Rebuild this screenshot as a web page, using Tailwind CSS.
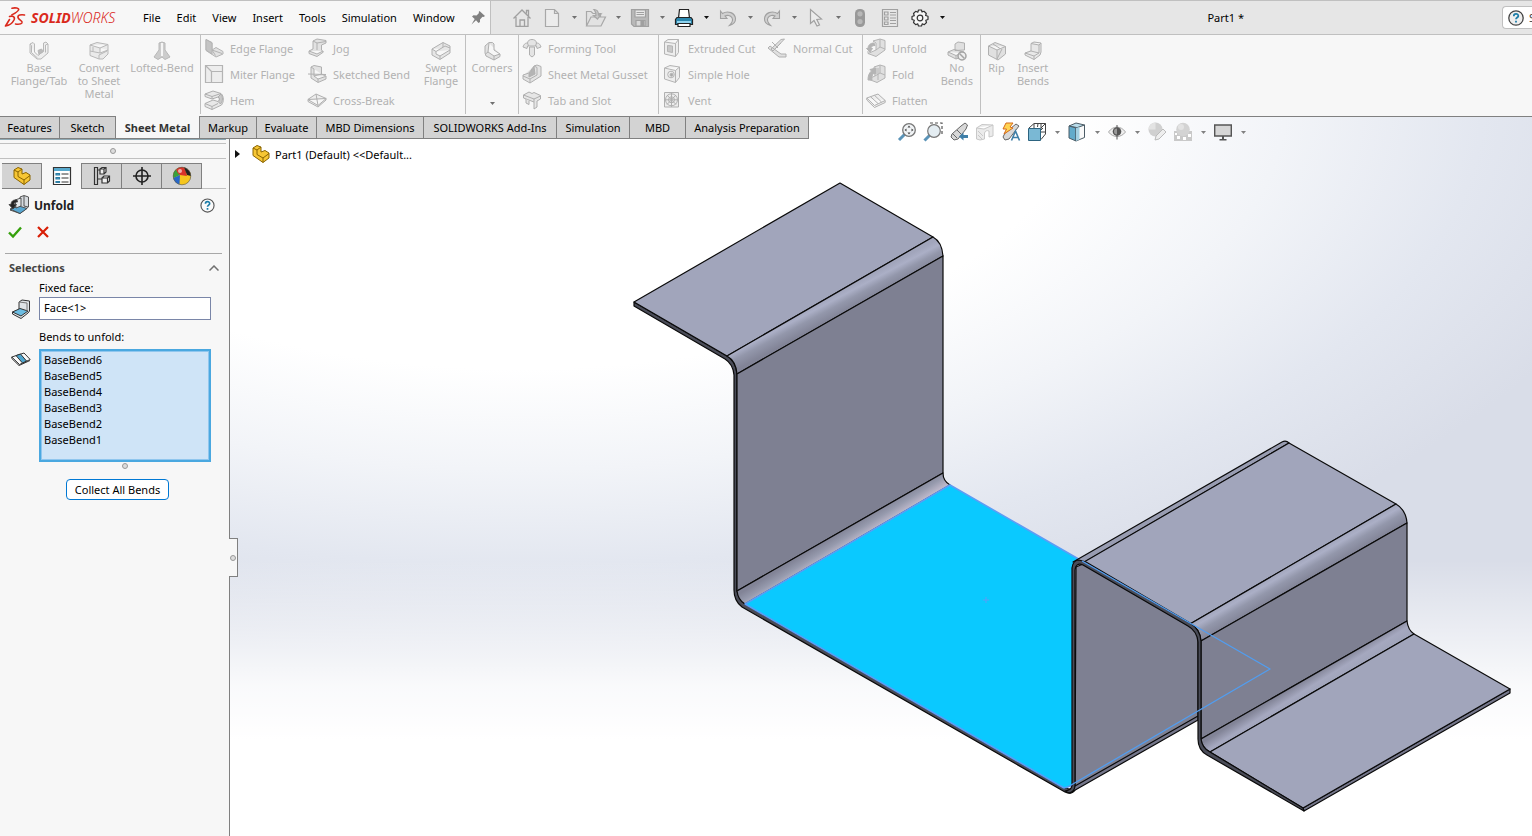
<!DOCTYPE html>
<html lang="en">
<head>
  <meta charset="UTF-8" />
  <meta name="viewport" content="width=device-width, initial-scale=1.0" />
  <title>Part1 - SOLIDWORKS</title>
  <script src="https://cdn.jsdelivr.net/npm/@tailwindcss/browser@4"></script>
</head>
<body class="h-screen flex flex-col overflow-hidden bg-[#f7f7f7] font-['Noto_Sans',sans-serif] text-[11px] leading-[13px] text-black">

  <!-- Title bar -->
  <header class="h-[35px] shrink-0 flex border-y border-[#c0c0c0] bg-[#e6e6e6]">
    <div class="flex items-center w-[491px] shrink-0 border-r border-[#c0c0c0] bg-[#f7f7f7]">
      <svg class="w-[22px] h-[22px] ml-1 mt-px" viewBox="0 0 22 22" fill="none" stroke="#da291c" stroke-width="1.600" stroke-linecap="round" stroke-linejoin="round">
        <path d="M8 1.200C11 .4 15.500 1 14.500 3C13.500 5 10.500 6.500 8 7.800"/>
        <path d="M5.500 9.500C8.500 8.500 11.500 9.500 10 13C8.500 16 4.500 18.500 1.500 19L5.500 12.500"/>
        <path d="M20.500 8C17 7.400 13.500 8 14 10.500C14.500 13 19 13.500 18 15.800C17 17.600 14 17.300 11.500 17"/>
      </svg>
      <div class="ml-[5px] w-28 text-[14px] italic text-[#da291c]"><span class="font-bold">SOLID</span><span class="font-light">WORKS</span></div>
      <nav class="flex gap-4">
        <button>File</button>
        <button>Edit</button>
        <button>View</button>
        <button>Insert</button>
        <button>Tools</button>
        <button>Simulation</button>
        <button>Window</button>
      </nav>
      <button class="ml-auto mr-1" aria-label="Pin menu">
        <svg class="w-4 h-4" viewBox="0 0 16 16" fill="#808080"><path d="M9.500 1L15 6L13.500 7L12.500 6.800L10 9.500L10 12L8.500 13L6 10.300L1.500 14.500L4.700 9L2 6.500L3.500 5.300L6.500 5.500L9 3L8.700 2Z"/></svg>
      </button>
    </div>

    <div class="flex items-center gap-2 pl-5">
      <button class="w-[22px] flex justify-center" aria-label="Home">
        <svg class="w-5 h-5" viewBox="0 0 20 20" fill="none" stroke="#a0a0a0" stroke-width="1.300"><path d="M1.500 10.500L10 2L18.500 10.500M4 9V18.300H16V9M14.500 5.500V2.500H16.500V8"/><path d="M8 18V12H12.500V18"/></svg>
      </button>
      <div class="flex">
        <button class="w-[22px] flex justify-center" aria-label="New"><svg class="w-5 h-5" viewBox="0 0 20 20" fill="#ececec" stroke="#a8a8a8" stroke-width="1.200"><path d="M3.500 1.500H12.500L16.500 5.500V18.500H3.500ZM12.500 1.500V5.500H16.500"/></svg></button>
        <button class="w-[22px] flex justify-center items-center" aria-label="New options"><svg class="w-[5px] h-[3px]" viewBox="0 0 5 3" fill="#707070"><path d="M0 0H5L2.500 3Z"/></svg></button>
        <button class="w-[22px] flex justify-center" aria-label="Open"><svg class="w-[22px] h-5" viewBox="0 0 22 20" fill="#e2e2e2" stroke="#a8a8a8" stroke-width="1.200"><path d="M1.500 18V3.500H6L8 5.500H15.500V9M1.500 18L6 9H20.500L16 18Z"/><path d="M9 1.500C12 1.500 13.500 4 13.500 7L16 6L12.500 11L8.500 7.500L11 7.500C11 5 10.500 3 9 1.500Z" fill="#c8c8c8"/></svg></button>
        <button class="w-[22px] flex justify-center items-center" aria-label="Open options"><svg class="w-[5px] h-[3px]" viewBox="0 0 5 3" fill="#707070"><path d="M0 0H5L2.500 3Z"/></svg></button>
        <button class="w-[22px] flex justify-center" aria-label="Save"><svg class="w-5 h-5" viewBox="0 0 20 20" fill="#b8b8b8" stroke="#a0a0a0" stroke-width="1.200"><path d="M1.500 1.500H18.500V18.500H4L1.500 16Z"/><path d="M5 2V9H15.500V2Z" fill="#e8e8e8"/><path d="M6.500 4.500H14M6.500 6.500H14"/><path d="M6 18V12.500H15V18Z" fill="#d8d8d8"/><path d="M11 13.500H13.500V18H11Z" fill="#a0a0a0"/></svg></button>
        <button class="w-[22px] flex justify-center items-center" aria-label="Save options"><svg class="w-[5px] h-[3px]" viewBox="0 0 5 3" fill="#707070"><path d="M0 0H5L2.500 3Z"/></svg></button>
        <button class="w-[22px] flex justify-center" aria-label="Print"><svg class="w-5 h-5" viewBox="0 0 20 20" stroke="#222" stroke-width="1.200"><path d="M5.500 1.500H14.500L15.500 10H4.500Z" fill="#fff"/><path d="M3 9.500H17L18.500 11.500V16.500H1.500V11.500Z" fill="#2a86ad"/><path d="M3 13H17V15H3Z" fill="#8fd3ee" stroke="none"/><path d="M4 15.500H16V18.500H4Z" fill="#fff"/></svg></button>
        <button class="w-[22px] flex justify-center items-center" aria-label="Print options"><svg class="w-[5px] h-[3px]" viewBox="0 0 5 3" fill="#111"><path d="M0 0H5L2.500 3Z"/></svg></button>
        <button class="w-[22px] flex justify-center" aria-label="Undo"><svg class="w-5 h-5" viewBox="0 0 20 20" fill="#d0d0d0" stroke="#a0a0a0" stroke-width="1.100"><path d="M2.500 3L4.500 5.500C10 2 17 5 17.500 10.500C17.700 14 15 16.500 11.500 17.500C14 15 15.500 12.500 14 9.800C12.500 7 9 7 7 8L9 10.500L2.500 10.500Z"/></svg></button>
        <button class="w-[22px] flex justify-center items-center" aria-label="Undo options"><svg class="w-[5px] h-[3px]" viewBox="0 0 5 3" fill="#707070"><path d="M0 0H5L2.500 3Z"/></svg></button>
        <button class="w-[22px] flex justify-center" aria-label="Redo"><svg class="w-5 h-5" viewBox="0 0 20 20" fill="#d0d0d0" stroke="#a0a0a0" stroke-width="1.100"><path d="M17.500 3L15.500 5.500C10 2 3 5 2.500 10.500C2.300 14 5 16.500 8.500 17.500C6 15 4.500 12.500 6 9.800C7.500 7 11 7 13 8L11 10.500L17.500 10.500Z"/></svg></button>
        <button class="w-[22px] flex justify-center items-center" aria-label="Redo options"><svg class="w-[5px] h-[3px]" viewBox="0 0 5 3" fill="#707070"><path d="M0 0H5L2.500 3Z"/></svg></button>
        <button class="w-[22px] flex justify-center" aria-label="Select"><svg class="w-5 h-5" viewBox="0 0 20 20" fill="#ececec" stroke="#a0a0a0" stroke-width="1.200"><path d="M4.500 1.500V15.500L8 12.500L11 18L13.500 17L10.800 11.500L15.500 11Z"/></svg></button>
        <button class="w-[22px] flex justify-center items-center" aria-label="Select options"><svg class="w-[5px] h-[3px]" viewBox="0 0 5 3" fill="#707070"><path d="M0 0H5L2.500 3Z"/></svg></button>
        <button class="w-[22px] flex justify-center" aria-label="Rebuild"><svg class="w-5 h-5" viewBox="0 0 20 20"><rect x="5" y="1" width="10" height="18" rx="4.500" fill="#999"/><circle cx="10" cy="5.800" r="2.600" fill="#b8b8b8"/><circle cx="10" cy="13.500" r="2.600" fill="#b8b8b8"/></svg></button>
      </div>
      <button class="w-[22px] flex justify-center" aria-label="File properties">
        <svg class="w-5 h-5" viewBox="0 0 20 20" fill="none" stroke="#a0a0a0" stroke-width="1.200"><path d="M2.500 1.500H17.500V18.500H2.500ZM4.500 4H8V7H4.500ZM4.500 9H8V12H4.500ZM4.500 14H8V16.500H4.500ZM10 4.500H16M10 7H16M10 10H16M10 12.500H16M10 15.500H16"/></svg>
      </button>
      <div class="flex">
        <button class="w-[22px] flex justify-center" aria-label="Options"><svg class="w-[18px] h-[18px]" viewBox="0 0 18 18" fill="#f7f7f7" stroke="#333" stroke-width="1.200" stroke-linejoin="round"><path d="M7.500 1H10.500L11 3L13 2.300L15.300 4.500L14.600 6.500L17 7.300V10.500L14.800 11.300L15.500 13.500L13.300 15.700L11.300 14.800L10.500 17H7.500L6.700 14.800L4.700 15.700L2.500 13.500L3.300 11.300L1 10.500V7.500L3.300 6.600L2.500 4.500L4.700 2.300L6.800 3.200Z"/><circle cx="9" cy="9" r="2.800"/></svg></button>
        <button class="w-[22px] flex justify-center items-center" aria-label="More options"><svg class="w-[5px] h-[3px]" viewBox="0 0 5 3" fill="#111"><path d="M0 0H5L2.500 3Z"/></svg></button>
      </div>
    </div>

    <h1 class="ml-auto self-center">Part1 *</h1>
    <div class="ml-[258px] w-[30px] h-[23px] self-center flex items-center shrink-0 overflow-hidden border border-r-0 border-[#c0c0c0] rounded-l-sm bg-white">
      <button class="ml-[5px] shrink-0" aria-label="Help"><svg class="w-4 h-4" viewBox="0 0 16 16" fill="none"><circle cx="8" cy="8" r="7.200" fill="#eee" stroke="#444" stroke-width="1.300"/><path d="M5.800 6.200C5.800 3.200 10.300 3.200 10.300 6C10.300 7.500 8 7.600 8 9.300M8 10.700V12.500" stroke="#1c7da8" stroke-width="1.800"/></svg></button>
      <input type="text" class="ml-[5px] w-32 shrink-0 placeholder:text-[#444]" placeholder="Search" aria-label="Search" />
    </div>
  </header>

  <!-- Sheet metal ribbon -->
  <div class="h-[82px] shrink-0 flex items-start border-b border-[#808080] text-[#b2b2b2]">
    <section class="w-[201px] h-[79px] flex items-start border-r border-[#c0c0c0]">
      <button class="w-[76px] shrink-0 flex flex-col items-center pt-[6px] pl-[2px]">
        <svg class="w-5 h-5" viewBox="0 0 20 20" fill="#eee" stroke="#b8b8b8"><path d="M1 3L4 1.500L5.500 3V11L9 14.500L14.500 10V2L17 1L19 3V12L12 18H8L1 12ZM1 3L2.500 4.500V11.500L8.500 17M19 3L16.500 4V11.500"/><path d="M9 9.500L12.500 8L14.500 10.500L10 13.500Z" fill="#bbb"/></svg>
        Base<br>Flange/Tab
      </button>
      <button class="w-[46px] shrink-0 flex flex-col items-center pt-[6px] text-center">
        <svg class="w-5 h-5" viewBox="0 0 20 20" fill="#eaeaea" stroke="#b8b8b8"><path d="M1 4L8 1.500L19 3.500V13L14 18H10L1 14.500ZM1 4L11 7L19 3.500M11 7V12L19 9M11 12L1 10M10 18V14L18 10M4 6V10"/></svg>
        <span>Convert to Sheet Metal</span>
      </button>
      <button class="w-[78px] shrink-0 flex flex-col items-center pt-[6px] pl-[2px]">
        <svg class="w-5 h-5" viewBox="0 0 20 20" fill="#ccc" stroke="#b8b8b8"><path d="M7 2L10 1L13 2V9L18 16L13 18.500L10 16L6 18.500L2 16L7 9Z"/><path d="M10 2V15" stroke="#f5f5f5" stroke-width="2"/></svg>
        Lofted-Bend
      </button>
    </section>

    <section class="w-[265px] h-[79px] flex items-start border-r border-[#c0c0c0] pl-[3px]">
      <div class="w-[103px] flex flex-col">
        <button class="h-[26px] flex items-center gap-[6px] whitespace-nowrap"><svg class="w-5 h-5 shrink-0" viewBox="0 0 20 20" fill="#e2e2e2" stroke="#b4b4b4"><path d="M2 1.500L8 4.500V12L12 9.500L19 13.500V16L12 19L2 12.500ZM8 12L18 15.500M8 12L11.500 17.500"/><path d="M2 1.500V12L8 16V5Z" fill="#c4c4c4"/></svg>Edge Flange</button>
        <button class="h-[26px] flex items-center gap-[6px] whitespace-nowrap"><svg class="w-5 h-5 shrink-0" viewBox="0 0 20 20" fill="#ededed" stroke="#b4b4b4"><path d="M1.500 1.500H18.500V18.500H1.500ZM1.500 1.500L7.500 7.500M7.500 18.500V7.500H18.500" stroke-width="1.200"/></svg>Miter Flange</button>
        <button class="h-[26px] flex items-center gap-[6px] whitespace-nowrap"><svg class="w-5 h-5 shrink-0" viewBox="0 0 20 20" fill="#e8e8e8" stroke="#aeaeae"><path d="M1 4L9 1L17 3.500C20 6 20 12 17.500 15L8 19.500L1 16.500V13.500L9 10L14 11.500C16 10 16 8 14 7L8 9L1 6.500Z"/><path d="M1 4L8 6.500L17 3.500M8 6.500V9M1 13.500L8 16.500L14 13.500M8 16.500V19.500" fill="none"/><path d="M14 7C16 8 16 10 14 11.500L16.500 14C19 11 19 7 17 4Z" fill="#c8c8c8"/></svg>Hem</button>
      </div>
      <div class="w-[110px] flex flex-col">
        <button class="h-[26px] flex items-center gap-[6px] whitespace-nowrap"><svg class="w-5 h-5 shrink-0" viewBox="0 0 20 20" fill="#e2e2e2" stroke="#b0b0b0"><path d="M6 3L10 1L19 2.500V5L14.500 7V12L16.500 14L10 18.500L2 15.500V13L6 11V7ZM10 5L19 3.500M10 5V12M2 13L10 16L16 13M6 3L10 5"/></svg>Jog</button>
        <button class="h-[26px] flex items-center gap-[6px] whitespace-nowrap"><svg class="w-5 h-5 shrink-0" viewBox="0 0 20 20" fill="#e2e2e2" stroke="#b0b0b0"><path d="M4 3L7 1.500L14.500 3V10L19 12V15L11 18.500L4 14ZM4 3L7 5V12L14.500 10M7 12L11 15L18.500 12.500M11 15V18M1 10L19 10.500"/></svg>Sketched Bend</button>
        <button class="h-[26px] flex items-center gap-[6px] whitespace-nowrap"><svg class="w-5 h-5 shrink-0" viewBox="0 0 20 20" fill="#eee" stroke="#b0b0b0"><path d="M.8 9.500L9 4L19.200 8.500L11 15.500ZM1 10V11.500L11 17L19 10V8.500M1 9.500L19 8.500M9 4L11 15.500"/></svg>Cross-Break</button>
      </div>
      <button class="w-[48px] flex flex-col items-center pt-[6px]">
        <svg class="w-5 h-5" viewBox="0 0 20 20" fill="#e6e6e6" stroke="#b0b0b0"><path d="M1 8L12 1.500L19 5V12L9 18.500L1 14ZM1 8L5 10.500L14 5L19 7M5 10.500V13L9 15L19 9M9 15V18M12 1.500V6"/></svg>
        Swept<span>Flange</span>
      </button>
    </section>

    <button class="w-[53px] h-[79px] flex flex-col items-center pt-[6px] border-r border-[#c0c0c0]">
      <svg class="w-5 h-5" viewBox="0 0 20 20" fill="#e2e2e2" stroke="#b0b0b0"><path d="M3 5L7 1.500H10.500L12 3V9L18 13V15.500L12 19L4 15L3 12ZM7 2L6 11L12 15L18 13M6 11L3.500 13M12 15V19"/></svg>
      Corners
      <svg class="w-[5px] h-[3px] mt-auto mb-[9px]" viewBox="0 0 5 3" fill="#707070"><path d="M0 0H5L2.500 3Z"/></svg>
    </button>

    <section class="w-[140px] h-[79px] flex flex-col border-r border-[#c0c0c0] pl-[3px]">
      <button class="h-[26px] flex items-center gap-[6px]"><svg class="w-5 h-5" viewBox="0 0 20 20" fill="#e4e4e4" stroke="#b0b0b0"><path d="M7.500 9V17L10 19L12.500 17V9Z"/><path d="M1 9C2 5.500 4 5 5.500 5C6 2 8 1.500 10 1.500C12 1.500 14 2 14.500 5C16 5 18 5.500 19 9L15 10.500L14.500 8H5.500L5 10.500Z"/><path d="M5.500 5L6.500 8M14.500 5L13.500 8"/></svg>Forming Tool</button>
      <button class="h-[26px] flex items-center gap-[6px] whitespace-nowrap"><svg class="w-5 h-5" viewBox="0 0 20 20" fill="#e4e4e4" stroke="#b0b0b0"><path d="M12 2L15 1L19 2.500V12L8 19L1 15V11L7 9ZM12 2L15 3.500V11L8 15L1 12M8 15V19"/><path d="M12 3L7 10V13L13 10Z" fill="#b4b4b4"/></svg>Sheet Metal Gusset</button>
      <button class="h-[26px] flex items-center gap-[6px]"><svg class="w-5 h-5" viewBox="0 0 20 20" fill="#e6e6e6" stroke="#aeaeae"><path d="M1.500 5L7 2L10 3.500L12 2.500L18.500 5.500V9L15 11V17L12 19V12L1.500 8ZM1.500 5L12 9V12M12 9L18.500 6"/><path d="M4 9V13L7 14.500V10.500" /></svg>Tab and Slot</button>
    </section>

    <section class="w-[204px] h-[79px] flex items-start border-r border-[#c0c0c0] pl-[3px]">
      <div class="w-[105px] flex flex-col">
        <button class="h-[26px] flex items-center gap-[6px] whitespace-nowrap"><svg class="w-5 h-5 shrink-0" viewBox="0 0 20 20" fill="#ededed" stroke="#b4b4b4"><path d="M2.500 4L6 1.500H16.500V14.500L13.500 18.500L2.500 16ZM2.500 4L13.500 5.500L16.500 1.500M13.500 5.500V18.500"/><path d="M5.500 7.500L10.500 8V14.500L5.500 13.500Z" fill="#c8c8c8"/></svg>Extruded Cut</button>
        <button class="h-[26px] flex items-center gap-[6px] whitespace-nowrap"><svg class="w-5 h-5 shrink-0" viewBox="0 0 20 20" fill="#ededed" stroke="#b4b4b4"><path d="M2.500 4L8 1.500L17.500 3V13.500L13.500 18.500L2.500 15ZM2.500 4L13.500 6.500L17.500 3M13.500 6.500V18.500"/><circle cx="9" cy="10.500" r="3.300"/><circle cx="9.500" cy="10.800" r="1.500" fill="#aaa"/></svg>Simple Hole</button>
        <button class="h-[26px] flex items-center gap-[6px] whitespace-nowrap"><svg class="w-5 h-5 shrink-0" viewBox="0 0 20 20" fill="#ededed" stroke="#b0b0b0"><path d="M2.500 2.500H16.500V17H2.500Z"/><circle cx="9.500" cy="9.800" r="6"/><circle cx="9.500" cy="9.800" r="3"/><path d="M2.500 9.800H16.500M9.500 2.500V17M5 5L14 14.500M14 5L5 14.500"/></svg>Vent</button>
      </div>
      <button class="h-[26px] flex items-center gap-[6px] whitespace-nowrap"><svg class="w-5 h-5 shrink-0" viewBox="0 0 20 20" fill="#e0e0e0" stroke="#b0b0b0"><path d="M1 10L3 8L14 16H19V19H12ZM14 1.500L17.500 1L6 13L4 11ZM5 4L11 10M8 11L14 5"/></svg>Normal Cut</button>
    </section>

    <section class="w-[118px] h-[79px] flex items-start border-r border-[#c0c0c0] pl-[3px]">
      <div class="w-[70px] flex flex-col">
        <button class="h-[26px] flex items-center gap-[6px]"><svg class="w-5 h-5" viewBox="0 0 20 20" fill="#e0e0e0" stroke="#b4b4b4"><path d="M7 3L14 1L19 2.500V12L10 18.500L2 15.500L10 12V5ZM14 1V9L10 12M14 9L19 11M2 15.500V13"/><path d="M8 5C4 5 2 7.500 2 10.500H.5L4 14L6.500 10.500H5C5 8.500 6 7.500 9 7.500Z" fill="#b4b4b4"/></svg>Unfold</button>
        <button class="h-[26px] flex items-center gap-[6px]"><svg class="w-5 h-5" viewBox="0 0 20 20" fill="#e0e0e0" stroke="#b4b4b4"><path d="M8 3L14 1L19 2.500V14L11 18.500L2 15L9 12ZM14 1V9L9 12M14 9L19 11M12 4V16"/><path d="M2 16C2 12 3 9 5.500 7L4 5.500L10 4V10L8 9C6 11 5.500 13 6 16Z" fill="#b4b4b4"/></svg>Fold</button>
        <button class="h-[26px] flex items-center gap-[6px]"><svg class="w-5 h-5" viewBox="0 0 20 20" fill="#eee" stroke="#b0b0b0"><path d="M.8 8L12 4L19.200 10.500L8.500 15.500ZM.8 8V10L8.500 17.500L19.200 12.500V10.500M4.500 6.700L12 13.500M8.500 5.300L15.500 12"/></svg>Flatten</button>
      </div>
      <button class="w-[48px] flex flex-col items-center pt-[6px]">
        <svg class="w-5 h-5" viewBox="0 0 20 20" fill="#e0e0e0" stroke="#b0b0b0"><path d="M8 3L11 1L17.500 2V9L8 9.500ZM1 11L7 8.500L17 11V15L9 18L1 14ZM1 11L9 14.500L15 12M9 14.500V18"/><circle cx="15" cy="15" r="4" fill="#eee" stroke="#a4a4a4" stroke-width="1.500"/><path d="M12.500 12.500L17.500 17.500" stroke="#a4a4a4" stroke-width="1.500"/></svg>
        No<span>Bends</span>
      </button>
    </section>

    <section class="flex items-start">
      <button class="w-[31px] flex flex-col items-center pt-[6px]">
        <svg class="w-5 h-5" viewBox="0 0 20 20" fill="#e0e0e0" stroke="#b0b0b0"><path d="M1.500 5L8 1.500L18.500 5.500V13L11 19L1.500 14ZM1.500 5L10 9L18.500 5.500M10 9V18.500M10 18L15 8M6 3L13 7.500"/></svg>
        Rip
      </button>
      <button class="w-[42px] flex flex-col items-center pt-[6px]">
        <svg class="w-5 h-5" viewBox="0 0 20 20" fill="#e8e8e8" stroke="#b0b0b0"><path d="M8 2.500L11 1L18 2V11L17 14L11 18.500L2 14V12L8 10ZM8 2.500L16 4L18 2M16 4V12L11 15L2 12M11 15V18.500M8 10L16 12"/></svg>
        Insert<span>Bends</span>
      </button>
    </section>
  </div>

  <main class="relative flex-1 min-h-0 flex flex-col">
    <!-- 3D view -->
    <svg class="absolute inset-0 w-full h-full" viewBox="0 117 1532 719" preserveAspectRatio="xMidYMid slice" stroke-linejoin="round">
      <defs>
        <radialGradient id="sky" gradientUnits="userSpaceOnUse" cx="0" cy="0" r="1" gradientTransform="translate(520 100) scale(1160 560)">
          <stop offset="0.480" stop-color="#ffffff"/>
          <stop offset="0.660" stop-color="#f2f4f8"/>
          <stop offset="0.830" stop-color="#e3e7f0"/>
          <stop offset="1" stop-color="#d9dde8"/>
        </radialGradient>
        <linearGradient id="floor" gradientUnits="userSpaceOnUse" x1="0" y1="560" x2="0" y2="740">
          <stop offset="0" stop-color="#fff" stop-opacity="0"/>
          <stop offset="0.700" stop-color="#fff" stop-opacity="0.850"/>
          <stop offset="1" stop-color="#fff"/>
        </linearGradient>
        <linearGradient id="bendOut" gradientUnits="userSpaceOnUse" x1="830" y1="296" x2="840" y2="315">
          <stop offset="0" stop-color="#a1a5bb"/><stop offset="0.250" stop-color="#abafc6"/><stop offset="0.550" stop-color="#9397ab"/><stop offset="1" stop-color="#828497"/>
        </linearGradient>
        <linearGradient id="bendOut2" gradientUnits="userSpaceOnUse" x1="1293" y1="563" x2="1304" y2="582">
          <stop offset="0" stop-color="#a1a5bb"/><stop offset="0.250" stop-color="#abafc6"/><stop offset="0.550" stop-color="#9397ab"/><stop offset="1" stop-color="#828497"/>
        </linearGradient>
        <linearGradient id="bendIn" gradientUnits="userSpaceOnUse" x1="840" y1="532" x2="848" y2="545">
          <stop offset="0" stop-color="#828497"/><stop offset="0.500" stop-color="#969aad"/><stop offset="1" stop-color="#bbb6c8"/>
        </linearGradient>
        <linearGradient id="bendIn2" gradientUnits="userSpaceOnUse" x1="1304" y1="680" x2="1312" y2="693">
          <stop offset="0" stop-color="#828497"/><stop offset="0.600" stop-color="#a5a8bf"/><stop offset="1" stop-color="#a1a5bb"/>
        </linearGradient>
      </defs>
      <rect y="117" width="1532" height="719" fill="url(#sky)"/>
      <rect y="117" width="1532" height="719" fill="url(#floor)"/>

      <g stroke="#0a0a0a" stroke-width="1.200">
        <!-- sheet thickness, left side -->
        <path d="M634 302L727 356Q736 361 737 374V590Q738 599 745 604L1064 788L1075 790Q1072 795 1065 792L742 607Q734 601 734 590V375Q733 364 725 359L634 306Z" fill="#4a4c58"/>
        <path d="M634 302L840 183L933 237L727 356Z" fill="#a1a5bb"/>
        <path d="M727 356L933 237Q942 242 943 256L737 374Q736 361 727 356Z" fill="url(#bendOut)"/>
        <path d="M737 374L943 256V473L737 591Z" fill="#7e8092"/>
        <path d="M737 591L943 473Q943 481 950 485L745 604Q738 600 737 591Z" fill="url(#bendIn)"/>
        <path d="M745 604L950 485L1082 561L1074 566V785L1064 788Z" fill="#0ac9ff" stroke="#5c9df5" stroke-width="1.600"/>

        <!-- inner wall and its lower bend -->
        <path d="M1073 786L1198 715V720L1070 793Z" fill="#74768a"/>
        <path d="M1076 567L1083 564L1198 631V716L1075 786Z" fill="#7e8092"/>
        <path d="M1073 562L1282 442Q1286 440 1289 443L1085 562Z" fill="#989cb1"/>
        <path d="M1084 562L1289 443L1396 504L1190 624Z" fill="#a1a5bb"/>
        <path d="M1190 624L1396 504Q1406 510 1407 523L1201 641Q1200 628 1190 624Z" fill="url(#bendOut2)"/>
        <path d="M1201 641L1407 523V621L1201 739Z" fill="#7e8092"/>
        <path d="M1201 739L1407 621Q1408 630 1414 634L1210 752Q1202 748 1201 739Z" fill="url(#bendIn2)"/>
        <path d="M1303 808L1510 689V693L1304 811Z" fill="#74768a"/>
        <path d="M1210 752L1414 634L1510 689L1303 808Z" fill="#a1a5bb"/>
        <!-- sheet thickness, right side -->
        <path d="M1072 785V568Q1073 560 1079 560L1086 562L1190 623Q1200 629 1201 641V739Q1202 748 1210 752L1303 808L1304 811L1207 755Q1198 750 1198 739V642Q1197 631 1188 626L1083 565Q1076 562 1075 570V785Q1075 792 1069 793L1065 791Q1072 790 1072 785Z" fill="#4a4c58"/>
      </g>
      <path d="M1082 561L1270 669L1066 788" fill="none" stroke="#519df0" stroke-width="1.300"/>
      <path d="M983 600H989M986 597V603" stroke="#5c9df5"/>
    </svg>

    <!-- Command tabs and view toolbar -->
    <div class="relative -mt-px flex items-start">
      <div class="flex h-[23px]" role="tablist">
        <button role="tab" class="w-[60px] border-y border-r border-[#808080] bg-[#d3d3d3]">Features</button>
        <button role="tab" class="w-14 border-y border-r border-[#808080] bg-[#d3d3d3]">Sketch</button>
        <button role="tab" aria-selected="true" class="w-[83px] border-b border-[#808080] bg-[#f7f7f7] font-bold text-[#333]">Sheet Metal</button>
        <button role="tab" class="w-[58px] border border-[#808080] bg-[#d3d3d3]">Markup</button>
        <button role="tab" class="w-[60px] border-y border-r border-[#808080] bg-[#d3d3d3]">Evaluate</button>
        <button role="tab" class="w-[107px] border-y border-r border-[#808080] bg-[#d3d3d3]">MBD Dimensions</button>
        <button role="tab" class="w-[133px] border-y border-r border-[#808080] bg-[#d3d3d3]">SOLIDWORKS Add-Ins</button>
        <button role="tab" class="w-[73px] border-y border-r border-[#808080] bg-[#d3d3d3]">Simulation</button>
        <button role="tab" class="w-14 border-y border-r border-[#808080] bg-[#d3d3d3]">MBD</button>
        <button role="tab" class="w-[123px] border-y border-r border-[#808080] bg-[#d3d3d3]">Analysis Preparation</button>
      </div>
      <div class="flex items-center ml-[88px] mt-[6px]">
        <div class="flex gap-[6px]">
          <button aria-label="Zoom to fit"><svg class="w-5 h-5" viewBox="0 0 20 20"><path d="M2 18L8 12" stroke="#5b94b8" stroke-width="3"/><circle cx="12" cy="8" r="6.300" fill="#f1f4f6" stroke="#777" stroke-width="1.300"/><path d="M12 3.500L13.500 5.500H10.500ZM12 12.500L13.500 10.500H10.500ZM7.500 8L9.500 6.500V9.500ZM16.500 8L14.500 6.500V9.500Z" fill="#444"/></svg></button>
          <button aria-label="Zoom to area"><svg class="w-5 h-5" viewBox="0 0 20 20"><path d="M7 1H19V13" fill="none" stroke="#555" stroke-width="1.200" stroke-dasharray="3 2"/><path d="M1.500 18.500L7 13" stroke="#5b94b8" stroke-width="3"/><circle cx="11" cy="9" r="6.300" fill="#e4edf2" stroke="#777" stroke-width="1.200"/></svg></button>
          <button aria-label="Previous view"><svg class="w-5 h-5" viewBox="0 0 20 20" stroke="#666"><path d="M16 1L18.500 3L17 7L9 17L5 18L2 15L3 12L12 4Z" fill="#d8d8d8"/><path d="M8 8L12 12M4 12L8 16" /><path d="M10 14.500L14.500 10.500V13H19V16H14.500V18.500Z" fill="#3f7fa8" stroke="none"/></svg></button>
          <button aria-label="Section view"><svg class="w-5 h-5" viewBox="0 0 20 20" fill="#ebebeb" stroke="#c8c8c8"><path d="M1.500 6L7 2.500L18 3V14L14 15V9C12 8 10 9 9.500 11V17L5 18L1.500 17ZM1.500 6L9 7L18 3M3 9L8 14M3 13L7 17"/></svg></button>
          <button aria-label="Dynamic annotation views"><svg class="w-5 h-5" viewBox="0 0 20 20"><path d="M15 2L18 4L8 17L4 18L2 15L4 11Z" fill="#d8d8d8" stroke="#666"/><path d="M5 1L12 1L9 5L12 6L3 12L5.500 7L2 7Z" fill="#ffd452" stroke="#d56a1c"/><path d="M10.500 18.500L14.500 9L18.500 18.500M12 15.500H17" fill="none" stroke="#3f7fa8" stroke-width="1.600"/></svg></button>
          <button aria-label="View orientation"><svg class="w-5 h-5" viewBox="0 0 20 20" fill="none" stroke="#444"><path d="M2 6L7 1.500H18.500V12L14 17.500M7 2V6M11 1.500L10.500 5M18.500 1.500L14 6M14 10H18.500M14 2V8M12 6L14 8L16 6"/><path d="M1.500 6.500H13.500V18.500H1.500Z" fill="#7ab8d4" stroke="#2d6480"/></svg></button>
        </div>
        <button class="w-5 flex justify-center" aria-label="View orientation options"><svg class="w-[5px] h-[3px]" viewBox="0 0 5 3" fill="#808080"><path d="M0 0H5L2.500 3Z"/></svg></button>
        <button aria-label="Display style"><svg class="w-5 h-5" viewBox="0 0 20 20" stroke="#4c5c66"><path d="M2 4L9 1L17.500 3L12 6Z" fill="#b9dcea"/><path d="M2 4L9 6V19L2 16Z" fill="#62abcb"/><path d="M9 6L17.500 3V15.500L9 19Z" fill="#fafafa"/><path d="M9 6L12.500 5V17.500L9 19Z" fill="#a3d0e2" stroke="none"/></svg></button>
        <button class="w-5 flex justify-center" aria-label="Display style options"><svg class="w-[5px] h-[3px]" viewBox="0 0 5 3" fill="#808080"><path d="M0 0H5L2.500 3Z"/></svg></button>
        <button aria-label="Hide or show items"><svg class="w-5 h-5" viewBox="0 0 20 20"><path d="M1.500 10C6 3.500 14 3.500 18.500 10C14 16 6 16 1.500 10Z" fill="#eee" stroke="#aaa"/><circle cx="10" cy="9.500" r="4.300" fill="#555"/><path d="M10 3V17.500" stroke="#555"/><path d="M10 6.500A3 3 0 0 0 10 12.500" fill="#999"/></svg></button>
        <button class="w-5 flex justify-center" aria-label="Hide or show options"><svg class="w-[5px] h-[3px]" viewBox="0 0 5 3" fill="#808080"><path d="M0 0H5L2.500 3Z"/></svg></button>
        <div class="flex gap-[6px]">
          <button aria-label="Edit appearance"><svg class="w-5 h-5" viewBox="0 0 20 20"><circle cx="8.500" cy="7.500" r="7" fill="#d0d0d0"/><path d="M8.500 .5A7 7 0 0 0 1.500 7.500H8.500Z" fill="#e3e3e3"/><path d="M8 18L9 14L16 7L19 10L12 17Z" fill="#eee" stroke="#bbb"/></svg></button>
          <button aria-label="Apply scene"><svg class="w-5 h-5" viewBox="0 0 20 20"><path d="M1 9H19V19H1Z" fill="#c9c9c9"/><path d="M2 11H4V13H2ZM4 14H7V17H4ZM10 15H13V18H10ZM15 12H18V15H15Z" fill="#fff"/><circle cx="10" cy="7.500" r="6.800" fill="#d3d3d3"/><circle cx="8" cy="5" r="3" fill="#e3e3e3"/></svg></button>
        </div>
        <button class="w-5 flex justify-center" aria-label="Scene options"><svg class="w-[5px] h-[3px]" viewBox="0 0 5 3" fill="#808080"><path d="M0 0H5L2.500 3Z"/></svg></button>
        <button aria-label="View settings"><svg class="w-5 h-5" viewBox="0 0 20 20"><path d="M1.700 3H18.300V14H1.700Z" fill="#d6d6d6" stroke="#555" stroke-width="1.400"/><path d="M9 14H11V17H13.500V18.500H6.500V17H9Z" fill="#555"/></svg></button>
        <button class="w-5 flex justify-center" aria-label="View settings options"><svg class="w-[5px] h-[3px]" viewBox="0 0 5 3" fill="#808080"><path d="M0 0H5L2.500 3Z"/></svg></button>
      </div>
    </div>

    <div class="relative flex-1 -mt-[3px] flex items-start">
      <!-- PropertyManager -->
      <aside class="relative self-stretch w-[230px] shrink-0 border-r border-[#808080] bg-[#f7f7f7]">
        <div class="h-[5px] mr-[3px] border-t border-b border-t-[#8fa9b3] border-b-[#c0c0c0]"></div>
        <div class="h-[15px] mr-[3px] flex items-center justify-center border-b border-[#c0c0c0]"><span class="w-[6px] h-[6px] rounded-full border border-[#999] bg-[#ddd]"></span></div>
        <div class="flex items-end mt-1 mr-[3px] pl-[2px]">
          <button class="w-10 h-[26px] flex items-center justify-center border border-l-0 border-[#808080] bg-[#d3d3d3]" aria-label="Feature tree"><svg class="w-5 h-5" viewBox="0 0 20 20" stroke="#8a6400"><path d="M2 4L6 1.500L10 3V8L14 6.500L18 9V14L12 18.500L2 11.500Z" fill="#f7c634"/><path d="M2 4L6 6V10.500L12 14L18 9.500M12 14V18.500M6 6L10 3" fill="none"/></svg></button>
          <button class="w-[39px] h-[26px] flex items-center justify-center" aria-label="Property manager"><svg class="w-5 h-5" viewBox="0 0 20 20" fill="none" stroke="#333" stroke-width="1.200"><path d="M1.500 1.500H18.500V18.500H1.500Z" fill="#fff"/><path d="M2 2H18V5H2Z" fill="#57a9cd" stroke="none"/><path d="M4 7.500H7.500V9H4ZM4 11.500H7.500V13H4ZM4 15.500H7.500V16.500H4Z" fill="#57a9cd" stroke="#2d7ea4"/><path d="M9.500 8H16.500M9.500 12H16.500M9.500 16H16.500"/></svg></button>
          <button class="w-[41px] h-[26px] flex items-center justify-center border border-[#808080] bg-[#d3d3d3]" aria-label="Configurations"><svg class="w-5 h-5" viewBox="0 0 20 20" fill="#f0f0f0" stroke="#333" stroke-width="1.200"><path d="M2.500 1.500H5.500V18.500H2.500ZM5.500 4H8M5.500 13H10" fill="none"/><path d="M8 3L10 1.500H14V6L12 8H8ZM8 3H12V8M12 3L14 1.500M10 12L12 10H17.500V15L15.500 17H10ZM10 12H15.500V17M15.500 12L17.500 10"/></svg></button>
          <button class="w-10 h-[26px] flex items-center justify-center border border-l-0 border-[#808080] bg-[#d3d3d3]" aria-label="Dimensions"><svg class="w-5 h-5" viewBox="0 0 20 20" fill="none" stroke="#222" stroke-width="1.600"><circle cx="10" cy="10" r="6"/><path d="M10 1V19M1 10H19"/></svg></button>
          <button class="w-10 h-[26px] flex items-center justify-center border border-l-0 border-[#808080] bg-[#d3d3d3]" aria-label="Appearances"><svg class="w-5 h-5" viewBox="0 0 20 20"><circle cx="10" cy="10" r="9" fill="#f5c61e"/><path d="M8 9L1.500 12A9 9 0 0 1 4 3.300Z" fill="#39a23b"/><path d="M8 9Q4 6 4.500 3A9 9 0 0 1 12.500 1.500Q14 6 15 10Z" fill="#d8352a"/><path d="M8 9L1.200 12A9 9 0 0 0 7.500 18.500Z" fill="#2767c9"/><path d="M12 1.300A9 9 0 0 1 19 10L15 9Z" fill="#222"/><circle cx="10" cy="10" r="8.800" fill="none" stroke="#555" stroke-width=".6"/><circle cx="8" cy="5" r="2" fill="#fff" opacity=".6"/></svg></button>
          <span class="flex-1 border-b border-[#c0c0c0]"></span>
        </div>

        <div class="flex items-center mt-[5px] pl-2 pr-[14px] h-[22px]">
          <svg class="w-[22px] h-[22px]" viewBox="0 0 22 22" stroke="#444" stroke-width=".9"><path d="M12 3L16 1.500L20.500 3V13L12 19.500L2 16L12 11Z" fill="#d6dade"/><path d="M2 15L11 12L19 14.500L12 19.500Z" fill="#58a6d0"/><path d="M7 6L13 4V12L8 14Z" fill="#e6e9eb"/><path d="M16 2V12L20 13" fill="none"/><path d="M9 6C5 5.500 3 7.500 3 10.500H1L5 15L8.500 10.500H6C6 8.500 7.500 8 9.500 8Z" fill="#222"/></svg>
          <h2 class="ml-1 text-[12px] font-bold text-[#222]">Unfold</h2>
          <button class="ml-auto" aria-label="Help"><svg class="w-[15px] h-[15px]" viewBox="0 0 16 16" fill="none"><circle cx="8" cy="8" r="7" fill="#fafafa" stroke="#555" stroke-width="1.200"/><path d="M5.800 6.200C5.800 3.200 10.300 3.200 10.300 6C10.300 7.500 8 7.600 8 9.300M8 10.700V12.500" stroke="#1c7da8" stroke-width="1.800"/></svg></button>
        </div>
        <div class="flex gap-[14px] mt-[9px] pl-2 h-[14px]">
          <button aria-label="OK"><svg class="w-[14px] h-[14px]" viewBox="0 0 14 14" fill="none" stroke="#35a00c" stroke-width="2.400"><path d="M1 7.500L5 11.500L13 2.500"/></svg></button>
          <button aria-label="Cancel"><svg class="w-[14px] h-[14px]" viewBox="0 0 14 14" fill="none" stroke="#d81e05" stroke-width="2.200"><path d="M2 2L12 12M12 2L2 12"/></svg></button>
        </div>

        <div class="mt-[14px] ml-[5px] mr-[7px] border-t border-[#a8a8a8]"></div>
        <div class="flex items-center justify-between mt-[7px] pl-[9px] pr-[10px]">
          <h3 class="font-bold text-[#444]">Selections</h3>
          <button aria-label="Collapse"><svg class="w-[10px] h-[6px]" viewBox="0 0 10 6" fill="none" stroke="#707070" stroke-width="1.500"><path d="M.5 5.500L5 1L9.500 5.500"/></svg></button>
        </div>
        <label for="fixedFace" class="block mt-[7px] ml-[39px]">Fixed face:</label>
        <div class="flex items-center mt-[3px] pl-[11px]">
          <svg class="w-5 h-5" viewBox="0 0 20 20" stroke="#333"><path d="M8 3L11 1L18.500 2V12L17 14L10 19.500L1.500 15V13L8 11Z" fill="#dfe3e6"/><path d="M1.500 13L9 9.500L17 12L10 17Z" fill="#6dbde2"/><path d="M16 4V12M8 3L16 4" fill="none" stroke="#777"/></svg>
          <input id="fixedFace" type="text" value="Face<1>" class="ml-2 w-[172px] h-[23px] px-1 pb-[2px] border border-[#7a86a8] bg-white" />
        </div>
        <label for="bends" class="block mt-[10px] ml-[39px]">Bends to unfold:</label>
        <div class="flex items-start mt-[6px] pl-[11px]">
          <svg class="w-5 h-5" viewBox="0 0 20 20" stroke="#333"><path d="M.8 8L13 4L19.200 10.500L8.500 15.500Z" fill="#fafafa"/><path d="M5 6.600L9.500 5L15.500 12L11.500 14Z" fill="#4fa6cf"/><path d="M.8 8V9.500L8 16.500L19 11.500" fill="none"/></svg>
          <select id="bends" size="6" class="ml-2 w-[172px] h-[113px] pt-px px-[2px] appearance-none overflow-hidden border-2 border-[#4aa8e0] bg-[#cfe4f7] outline-none shadow-[inset_0_0_0_1px_#90c6ee]">
            <option class="h-4 p-0 pl-px leading-4">BaseBend6</option>
            <option class="h-4 p-0 pl-px leading-4">BaseBend5</option>
            <option class="h-4 p-0 pl-px leading-4">BaseBend4</option>
            <option class="h-4 p-0 pl-px leading-4">BaseBend3</option>
            <option class="h-4 p-0 pl-px leading-4">BaseBend2</option>
            <option class="h-4 p-0 pl-px leading-4">BaseBend1</option>
          </select>
        </div>
        <div class="ml-[39px] w-[172px] h-2 flex items-center justify-center"><span class="w-[6px] h-[6px] rounded-full border border-[#999] bg-[#ddd]"></span></div>
        <button class="block mt-[9px] ml-[66px] w-[103px] h-[21px] rounded border border-[#0078d4] bg-white">Collect All Bends</button>

        <!-- splitter grip -->
        <div class="absolute top-[399px] -right-[9px] w-[9px] h-[39px] flex items-center pl-px border border-l-0 border-[#808080] bg-[#f7f7f7]"><span class="w-[6px] h-[6px] rounded-full border border-[#999] bg-[#ddd]"></span></div>
      </aside>

      <!-- Flyout tree -->
      <div class="flex items-center pl-1 mt-[5px]">
        <button aria-label="Expand" class="p-px"><svg class="w-[5px] h-2" viewBox="0 0 5 8" fill="#111"><path d="M0 0L5 4L0 8Z"/></svg></button>
        <svg class="w-5 h-5 ml-[10px]" viewBox="0 0 20 20" stroke="#8a6400"><path d="M2 4L6 1.500L10 3V8L14 6.500L18 9V14L12 18.500L2 11.500Z" fill="#f7c634"/><path d="M2 4L6 6V10.500L12 14L18 9.500M12 14V18.500M6 6L10 3" fill="none"/></svg>
        <span class="ml-1">Part1 (Default) &lt;&lt;Default...</span>
      </div>
    </div>
  </main>
</body>
</html>
